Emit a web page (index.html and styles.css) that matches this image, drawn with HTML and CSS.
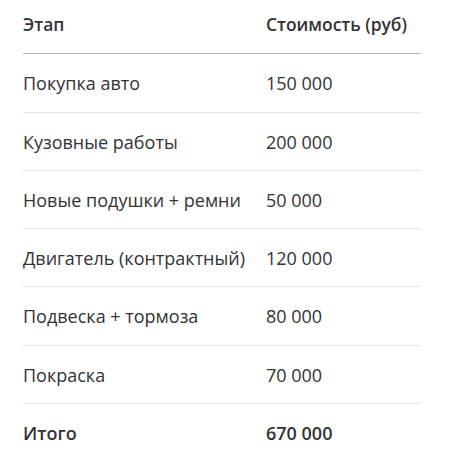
FILE: index.html
```html
<!DOCTYPE html>
<html lang="ru">
<head>
<meta charset="utf-8">
<link rel="stylesheet" href="styles.css">
</head>
<body>
<table class="costs">
  <thead>
    <tr><th class="stage">Этап</th><th>Стоимость (руб)</th></tr>
  </thead>
  <tbody>
    <tr><td class="stage">Покупка авто</td><td>150 000</td></tr>
    <tr><td class="stage">Кузовные работы</td><td>200 000</td></tr>
    <tr><td class="stage">Новые подушки + ремни</td><td>50 000</td></tr>
    <tr><td class="stage">Двигатель (контрактный)</td><td>120 000</td></tr>
    <tr><td class="stage">Подвеска + тормоза</td><td>80 000</td></tr>
    <tr><td class="stage">Покраска</td><td>70 000</td></tr>
    <tr class="total"><td class="stage">Итого</td><td>670 000</td></tr>
  </tbody>
</table>
</body>
</html>
```
FILE: styles.css
```css
html, body {
  margin: 0;
  padding: 0;
  background: #ffffff;
}
body {
  padding: 0 34px 0 23px;
  font-family: "Open Sans", "Liberation Sans", sans-serif;
  font-size: 18px;
  color: #333333;
}
.costs {
  width: 398px;
  border-collapse: collapse;
  margin-top: -3px;
}
.costs th, .costs td {
  text-align: left;
  padding: 16px 0;
  line-height: 25.3px;
  vertical-align: middle;
}
.costs th {
  font-size: 17.4px;
  font-weight: 600;
  padding-top: 15px;
  padding-bottom: 16px;
  border-bottom: 1px solid #bdbdbd;
}
.costs td {
  padding-top: 17px;
  padding-bottom: 15px;
  border-bottom: 1px solid #e5e5e5;
}
.costs .stage {
  width: 243px;
}
.costs .total td {
  font-weight: 600;
  border-bottom: none;
}
```
